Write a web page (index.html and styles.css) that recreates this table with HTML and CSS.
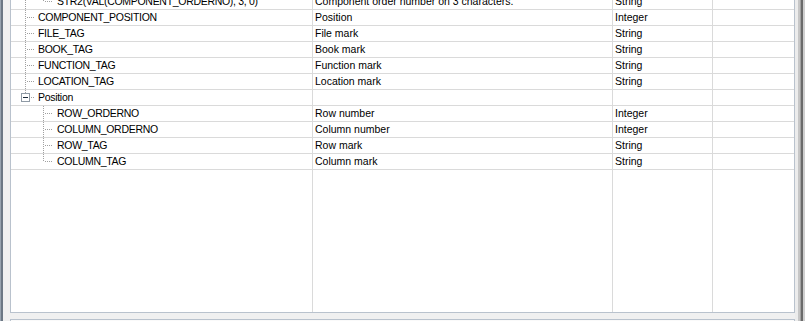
FILE: index.html
```html
<!DOCTYPE html>
<html>
<head>
<meta charset="utf-8">
<link rel="stylesheet" href="styles.css">
</head>
<body>
<div class="strip-left"></div>
<div class="main">
  <div class="panel">
    <div class="row">
      <div class="cell tree"><svg width="46" height="15"><line class="dot" x1="14.5" y1="0" x2="14.5" y2="15"/><line class="dot" x1="32.5" y1="0" x2="32.5" y2="8"/><line class="dot" x1="34" y1="7.5" x2="42" y2="7.5"/></svg><span>STR2(VAL(COMPONENT_ORDERNO), 3, 0)</span></div>
      <div class="cell">Component order number on 3 characters.</div>
      <div class="cell">String</div>
      <div class="cell"></div>
    </div>
    <div class="row">
      <div class="cell tree"><svg width="27" height="15"><line class="dot" x1="14.5" y1="0" x2="14.5" y2="15"/><line class="dot" x1="16" y1="7.5" x2="24" y2="7.5"/></svg><span>COMPONENT_POSITION</span></div>
      <div class="cell">Position</div>
      <div class="cell">Integer</div>
      <div class="cell"></div>
    </div>
    <div class="row">
      <div class="cell tree"><svg width="27" height="15"><line class="dot" x1="14.5" y1="0" x2="14.5" y2="15"/><line class="dot" x1="16" y1="7.5" x2="24" y2="7.5"/></svg><span>FILE_TAG</span></div>
      <div class="cell">File mark</div>
      <div class="cell">String</div>
      <div class="cell"></div>
    </div>
    <div class="row">
      <div class="cell tree"><svg width="27" height="15"><line class="dot" x1="14.5" y1="0" x2="14.5" y2="15"/><line class="dot" x1="16" y1="7.5" x2="24" y2="7.5"/></svg><span>BOOK_TAG</span></div>
      <div class="cell">Book mark</div>
      <div class="cell">String</div>
      <div class="cell"></div>
    </div>
    <div class="row">
      <div class="cell tree"><svg width="27" height="15"><line class="dot" x1="14.5" y1="0" x2="14.5" y2="15"/><line class="dot" x1="16" y1="7.5" x2="24" y2="7.5"/></svg><span>FUNCTION_TAG</span></div>
      <div class="cell">Function mark</div>
      <div class="cell">String</div>
      <div class="cell"></div>
    </div>
    <div class="row">
      <div class="cell tree"><svg width="27" height="15"><line class="dot" x1="14.5" y1="0" x2="14.5" y2="15"/><line class="dot" x1="16" y1="7.5" x2="24" y2="7.5"/></svg><span>LOCATION_TAG</span></div>
      <div class="cell">Location mark</div>
      <div class="cell">String</div>
      <div class="cell"></div>
    </div>
    <div class="row">
      <div class="cell tree"><svg width="27" height="15"><line class="dot" x1="14.5" y1="0" x2="14.5" y2="3"/><rect class="box" x="10.5" y="3.5" width="8" height="8"/><line class="minus" x1="12" y1="7.5" x2="17" y2="7.5"/><line class="dot" x1="20" y1="7.5" x2="24" y2="7.5"/></svg><span>Position</span></div>
      <div class="cell"></div>
      <div class="cell"></div>
      <div class="cell"></div>
    </div>
    <div class="row">
      <div class="cell tree"><svg width="46" height="15"><line class="dot" x1="32.5" y1="0" x2="32.5" y2="15"/><line class="dot" x1="34" y1="7.5" x2="42" y2="7.5"/></svg><span>ROW_ORDERNO</span></div>
      <div class="cell">Row number</div>
      <div class="cell">Integer</div>
      <div class="cell"></div>
    </div>
    <div class="row">
      <div class="cell tree"><svg width="46" height="15"><line class="dot" x1="32.5" y1="0" x2="32.5" y2="15"/><line class="dot" x1="34" y1="7.5" x2="42" y2="7.5"/></svg><span>COLUMN_ORDERNO</span></div>
      <div class="cell">Column number</div>
      <div class="cell">Integer</div>
      <div class="cell"></div>
    </div>
    <div class="row">
      <div class="cell tree"><svg width="46" height="15"><line class="dot" x1="32.5" y1="0" x2="32.5" y2="15"/><line class="dot" x1="34" y1="7.5" x2="42" y2="7.5"/></svg><span>ROW_TAG</span></div>
      <div class="cell">Row mark</div>
      <div class="cell">String</div>
      <div class="cell"></div>
    </div>
    <div class="row">
      <div class="cell tree"><svg width="46" height="15"><line class="dot" x1="32.5" y1="0" x2="32.5" y2="8"/><line class="dot" x1="34" y1="7.5" x2="42" y2="7.5"/></svg><span>COLUMN_TAG</span></div>
      <div class="cell">Column mark</div>
      <div class="cell">String</div>
      <div class="cell"></div>
    </div>
    <div class="filler">
      <div class="fcell"></div>
      <div class="fcell"></div>
      <div class="fcell"></div>
      <div class="fcell"></div>
    </div>
  </div>
  <div class="lower"></div>
</div>
<div class="strip-right">
  <div class="s1"></div>
  <div class="s2"></div>
  <div class="s3"></div>
  <div class="s4"></div>
  <div class="s5"></div>
</div>
</body>
</html>
```
FILE: styles.css
```css
html, body {
  margin: 0;
  padding: 0;
  height: 321px;
  overflow: hidden;
}
body {
  display: flex;
  background: #f0f0f0;
  font-family: "Liberation Sans", Arial, sans-serif;
  font-size: 10.5px;
  color: #000;
}
.strip-left {
  width: 2px;
  border-left: 1px solid #98a3af;
  background: #6c7784;
  flex-shrink: 0;
}
.main {
  margin-left: 7px;
  width: 785px;
  flex-shrink: 0;
  display: flex;
  flex-direction: column;
}
.panel {
  margin-top: -7px;
  height: 320px;
  flex-shrink: 0;
  box-sizing: border-box;
  border: 1px solid #b9c2cd;
  background: #fff;
  display: flex;
  flex-direction: column;
}
.row {
  display: grid;
  grid-template-columns: 302px 300px 100px 1fr;
  height: 16px;
  flex-shrink: 0;
}
.cell {
  height: 15px;
  line-height: 15px;
  border-bottom: 1px solid #dadada;
  border-right: 1px solid #dadada;
  padding-left: 2px;
  white-space: nowrap;
  overflow: hidden;
}
.cell:last-child {
  border-right: none;
}
.tree {
  display: flex;
  padding-left: 0;
  letter-spacing: -0.3px;
}
.tree svg {
  flex-shrink: 0;
  display: block;
}
.dot {
  stroke: #a0a0a0;
  stroke-width: 1;
  stroke-dasharray: 1 1;
  shape-rendering: crispEdges;
}
.box {
  fill: #fff;
  stroke: #8f9aa5;
  stroke-width: 1;
  shape-rendering: crispEdges;
}
.minus {
  stroke: #1b2a3a;
  stroke-width: 1;
  shape-rendering: crispEdges;
}
.filler {
  flex: 1;
  display: grid;
  grid-template-columns: 302px 300px 100px 1fr;
}
.fcell {
  border-right: 1px solid #dadada;
}
.fcell:last-child {
  border-right: none;
}
.lower {
  margin-top: 6px;
  height: 1px;
  flex-shrink: 0;
  border: 1px solid #b9c2cd;
  border-bottom: none;
  background: #fafafa;
}
.strip-right {
  display: flex;
  flex-shrink: 0;
  width: 10px;
}
.s1 { width: 3px; background: #ececec; }
.s2 { width: 2px; background: #c6c6c6; }
.s3 { width: 1px; background: #a2a2a2; }
.s4 { width: 2px; background: #6a6a6a; }
.s5 { width: 2px; background: #cfcfcf; }
```
